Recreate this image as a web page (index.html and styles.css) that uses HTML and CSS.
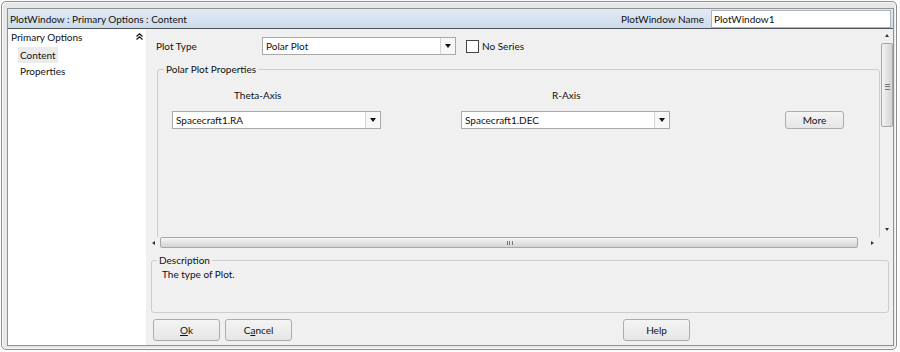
FILE: index.html
```html
<!DOCTYPE html>
<html lang="en">
<head>
    <meta charset="UTF-8">
    <title>PlotWindow : Primary Options : Content</title>
    <link rel="stylesheet" href="styles.css">
</head>
<body>
    <div class="window">
        <div class="frame">
            <div class="titlebar">
                <span class="path">PlotWindow : Primary Options : Content</span>
                <span class="name-label">PlotWindow Name</span>
                <div class="name-input">PlotWindow1</div>
            </div>
            <div class="main">
                <div class="tree">
                    <div class="tree-head">
                        <span>Primary Options</span>
                        <svg class="collapse" width="7" height="7" viewBox="0 0 7 7">
                            <path d="M0.5 3.5 L3.5 0.8 L6.5 3.5 M0.5 6.5 L3.5 3.8 L6.5 6.5" fill="none" stroke="#111" stroke-width="1.2"/>
                        </svg>
                    </div>
                    <div class="tree-item selected">Content</div>
                    <div class="tree-item">Properties</div>
                </div>
                <div class="panel">
                    <div class="scroll-box">
                        <div class="viewport">
                            <div class="type-row">
                                <span class="type-label">Plot Type</span>
                                <div class="combo type-combo"><span class="combo-text">Polar Plot</span><span class="combo-arrow"></span></div>
                                <span class="checkbox"></span>
                                <span class="check-label">No Series</span>
                            </div>
                            <fieldset class="group polar">
                                <legend>Polar Plot Properties</legend>
                                <div class="axes">
                                    <span class="axis-label theta">Theta-Axis</span>
                                    <span class="axis-label r">R-Axis</span>
                                    <span></span>
                                    <div class="combo"><span class="combo-text">Spacecraft1.RA</span><span class="combo-arrow"></span></div>
                                    <div class="combo"><span class="combo-text">Spacecraft1.DEC</span><span class="combo-arrow"></span></div>
                                    <button class="btn more">More</button>
                                </div>
                            </fieldset>
                        </div>
                        <div class="vscroll">
                            <span class="arrow up"></span>
                            <div class="vthumb"><span class="vgrip"></span></div>
                            <span class="arrow down"></span>
                        </div>
                        <div class="hscroll">
                            <span class="arrow left"></span>
                            <div class="hthumb"><span class="hgrip"></span></div>
                            <span class="arrow right"></span>
                        </div>
                        <div class="corner"></div>
                    </div>
                    <fieldset class="group description">
                        <legend>Description</legend>
                        <p>The type of Plot.</p>
                    </fieldset>
                    <div class="buttons">
                        <button class="btn"><u>O</u>k</button>
                        <button class="btn cancel">C<u>a</u>ncel</button>
                        <button class="btn help">Help</button>
                    </div>
                </div>
            </div>
        </div>
    </div>
</body>
</html>
```

FILE: styles.css
```css
body {
    margin: 0;
    font-family: Lato, "Noto Sans", sans-serif;
    font-size: 10px;
    color: #111;
    background: #fbfbfb;
}
.window {
    margin: 1px 3px 2px 1px;
    height: 349px;
    box-sizing: border-box;
    border: 1px solid #8e8e8e;
    border-radius: 5px;
    padding: 6px 2px 3px 5px;
    background: #e7e7e7;
    box-shadow: inset 0 0 0 1px #fafafa;
}
.frame {
    height: 100%;
    box-sizing: border-box;
    border: 1px solid #929292;
    background: #f0f0f0;
    display: flex;
    flex-direction: column;
}
.titlebar {
    height: 19px;
    border-bottom: 1px solid #4e545a;
    background: linear-gradient(#e2eaf4, #cddbea);
    display: flex;
    align-items: center;
    padding-left: 2px;
}
.path {
    flex: 1;
}
.name-label {
    margin-right: 7px;
}
.name-input {
    width: 176px;
    height: 16px;
    line-height: 16px;
    margin-right: 2px;
    padding-left: 2px;
    background: #fff;
    border: 1px solid #aab4c0;
}
.main {
    flex: 1;
    display: flex;
    min-height: 0;
}
.tree {
    width: 138px;
    background: #fff;
}
.tree-head {
    display: flex;
    justify-content: space-between;
    align-items: center;
    height: 16px;
    padding: 0 3px 0 3px;
}
.collapse {
    margin-top: -1px;
}
.tree-item {
    display: table;
    height: 16px;
    line-height: 16px;
    margin-left: 10px;
    padding: 0 2px;
}
.tree-item.selected {
    margin-top: 2px;
    background: #ebebeb;
}
.panel {
    flex: 1;
    display: flex;
    flex-direction: column;
}
.scroll-box {
    display: grid;
    grid-template-columns: 1fr 12px;
    grid-template-rows: 208px 11px;
}
.viewport {
    overflow: hidden;
}
.type-row {
    display: flex;
    align-items: center;
    height: 18px;
    margin-top: 8px;
    padding-left: 10px;
}
.type-label {
    width: 106px;
}
.combo {
    height: 18px;
    box-sizing: border-box;
    border: 1px solid #a9a9a9;
    background: #fff;
    display: flex;
    align-items: center;
}
.type-combo {
    width: 194px;
}
.combo-text {
    flex: 1;
    padding-left: 3px;
}
.combo-arrow {
    width: 14px;
    height: 100%;
    border-left: 1px solid #d6d6d6;
    background: #f7f7f7;
    display: flex;
    align-items: center;
    justify-content: center;
}
.combo-arrow::before {
    content: "";
    border-left: 3px solid transparent;
    border-right: 3px solid transparent;
    border-top: 4px solid #111;
}
.checkbox {
    width: 11px;
    height: 11px;
    margin-left: 10px;
    border: 1px solid #444;
    background: #fff;
}
.check-label {
    margin-left: 3px;
}
.group {
    border: 1px solid #cdcdcd;
    border-radius: 3px;
    padding: 0;
    min-width: 0;
}
.group legend {
    line-height: 12px;
    padding: 0 2px;
}
.polar {
    margin: 8px 1px 0 11px;
    height: 200px;
}
.polar legend {
    margin-left: 6px;
}
.axes {
    display: grid;
    grid-template-columns: 209px 209px 59px;
    grid-template-rows: 14px 18px;
    column-gap: 80px;
    row-gap: 9px;
    margin-top: 13px;
    padding-left: 14px;
}
.axis-label {
    line-height: 14px;
}
.theta {
    padding-left: 62px;
}
.r {
    padding-left: 91px;
}
.btn {
    font: inherit;
    color: inherit;
    border: 1px solid #acacac;
    border-radius: 3px;
    background: linear-gradient(#f4f4f4, #e6e6e6);
    padding: 0;
    height: 22px;
    width: 67px;
}
.more {
    height: 18px;
    width: 59px;
    margin-left: 35px;
}
.vscroll {
    background: #f0f0f0;
    position: relative;
}
.vthumb {
    position: absolute;
    left: 0;
    right: 0;
    top: 14px;
    height: 84px;
    box-sizing: border-box;
    border: 1px solid #a8a8a8;
    border-radius: 2px;
    background: linear-gradient(90deg, #f3f3f3, #d3d3d3);
}
.vgrip {
    position: absolute;
    left: 3px;
    top: 40px;
    width: 5px;
    height: 4px;
    border-top: 1px solid #777;
    border-bottom: 1px solid #777;
}
.vgrip::after {
    content: "";
    position: absolute;
    left: 0;
    right: 0;
    top: 1px;
    border-top: 1px solid #777;
}
.hscroll {
    background: #f0f0f0;
    position: relative;
}
.hthumb {
    position: absolute;
    left: 14px;
    right: 23px;
    top: 0;
    bottom: 0;
    box-sizing: border-box;
    border: 1px solid #a8a8a8;
    border-radius: 2px;
    background: linear-gradient(#f5f5f5, #d3d3d3);
}
.hgrip {
    position: absolute;
    left: 346px;
    top: 3px;
    width: 4px;
    height: 4px;
    border-left: 1px solid #777;
    border-right: 1px solid #777;
}
.hgrip::after {
    content: "";
    position: absolute;
    top: 0;
    bottom: 0;
    left: 1px;
    border-left: 1px solid #777;
}
.arrow {
    position: absolute;
    width: 0;
    height: 0;
}
.arrow.up {
    top: 5px;
    left: 4px;
    border-left: 2px solid transparent;
    border-right: 2px solid transparent;
    border-bottom: 3px solid #333;
}
.arrow.down {
    bottom: 6px;
    left: 4px;
    border-left: 2px solid transparent;
    border-right: 2px solid transparent;
    border-top: 3px solid #333;
}
.arrow.left {
    left: 6px;
    top: 4px;
    border-top: 2px solid transparent;
    border-bottom: 2px solid transparent;
    border-right: 3px solid #333;
}
.arrow.right {
    right: 7px;
    top: 4px;
    border-top: 2px solid transparent;
    border-bottom: 2px solid transparent;
    border-left: 3px solid #333;
}
.corner {
    background: #f0f0f0;
}
.description {
    margin: 6px 4px 0 5px;
    height: 59px;
    box-sizing: border-box;
}
.description legend {
    margin-left: 5px;
}
.description p {
    margin: 1px 0 0 10px;
    line-height: 14px;
}
.buttons {
    display: flex;
    margin: 6px 0 0 7px;
}
.cancel {
    margin-left: 5px;
}
.help {
    margin-left: 331px;
}
```
